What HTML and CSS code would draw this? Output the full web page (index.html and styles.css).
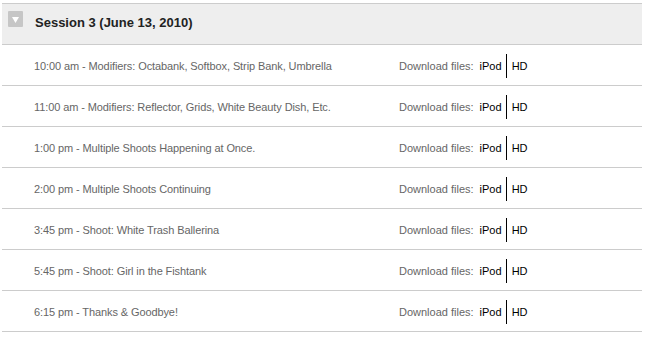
FILE: index.html
```html
<!DOCTYPE html>
<html>
<head>
<meta charset="utf-8">
<link rel="stylesheet" href="styles.css">
</head>
<body>
<div class="session">
  <div class="session-head">
    <span class="toggle"><svg width="15" height="16" viewBox="0 0 15 16"><rect width="15" height="16" rx="1" fill="#c6c6c6"/><polygon points="4,6 11,6 7.5,12" fill="#fff"/></svg></span>
    <h2 class="session-title">Session 3 (June 13, 2010)</h2>
  </div>
  <ul class="talks">
    <li class="talk"><span class="talk-name">10:00 am - Modifiers: Octabank, Softbox, Strip Bank, Umbrella</span><span class="dl"><span class="dl-label">Download files:</span><a class="dl-link ipod">iPod</a><a class="dl-link hd">HD</a></span></li>
    <li class="talk"><span class="talk-name">11:00 am - Modifiers: Reflector, Grids, White Beauty Dish, Etc.</span><span class="dl"><span class="dl-label">Download files:</span><a class="dl-link ipod">iPod</a><a class="dl-link hd">HD</a></span></li>
    <li class="talk"><span class="talk-name">1:00 pm - Multiple Shoots Happening at Once.</span><span class="dl"><span class="dl-label">Download files:</span><a class="dl-link ipod">iPod</a><a class="dl-link hd">HD</a></span></li>
    <li class="talk"><span class="talk-name">2:00 pm - Multiple Shoots Continuing</span><span class="dl"><span class="dl-label">Download files:</span><a class="dl-link ipod">iPod</a><a class="dl-link hd">HD</a></span></li>
    <li class="talk"><span class="talk-name">3:45 pm - Shoot: White Trash Ballerina</span><span class="dl"><span class="dl-label">Download files:</span><a class="dl-link ipod">iPod</a><a class="dl-link hd">HD</a></span></li>
    <li class="talk"><span class="talk-name">5:45 pm - Shoot: Girl in the Fishtank</span><span class="dl"><span class="dl-label">Download files:</span><a class="dl-link ipod">iPod</a><a class="dl-link hd">HD</a></span></li>
    <li class="talk"><span class="talk-name">6:15 pm - Thanks &amp; Goodbye!</span><span class="dl"><span class="dl-label">Download files:</span><a class="dl-link ipod">iPod</a><a class="dl-link hd">HD</a></span></li>
  </ul>
</div>
</body>
</html>
```
FILE: styles.css
```css
html, body {
  margin: 0;
  padding: 0;
  background: #fff;
}
body {
  padding: 3px 5px 0 2px;
  font-family: "Liberation Sans", Arial, sans-serif;
}
.session {
  width: 640px;
}
.session-head {
  display: flex;
  align-items: center;
  height: 40px;
  background: #eeeeee;
  border-top: 1px solid #cccccc;
  border-bottom: 1px solid #cccccc;
  padding-left: 6px;
}
.toggle {
  display: flex;
  width: 15px;
  height: 16px;
  margin-top: -10px;
}
.session-title {
  margin: -3px 0 0 12px;
  font-size: 13px;
  font-weight: bold;
  color: #222;
}
.talks {
  list-style: none;
  margin: 0;
  padding: 0;
}
.talk {
  display: flex;
  align-items: center;
  height: 38px;
  padding-top: 2px;
  border-bottom: 1px solid #cccccc;
  padding-left: 32px;
  font-size: 11px;
  color: #666;
}
.talk-name {
  width: 365px;
  white-space: nowrap;
  letter-spacing: -0.1px;
}
.dl {
  display: flex;
  align-items: center;
}
.dl-label {
  margin-right: 6px;
}
.dl-link {
  color: #000;
  text-decoration: none;
}
.ipod {
  padding-right: 4px;
  border-right: 1px solid #000;
  line-height: 24px;
}
.hd {
  padding-left: 5px;
}
```
